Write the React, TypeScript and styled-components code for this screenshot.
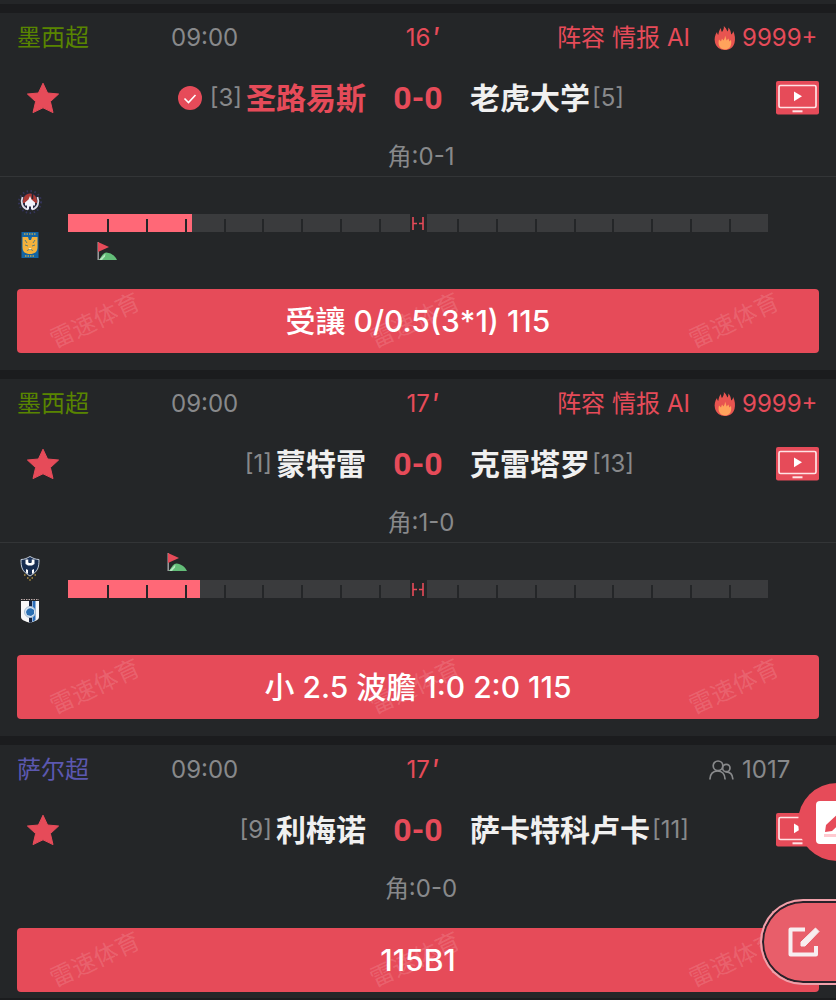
import React, { Fragment } from "react";
import styled, { createGlobalStyle } from "styled-components";

const RED = "#e64b59";
const BG = "#242628";
const GREY = "#88898b";

const GlobalStyle = createGlobalStyle`
  * { box-sizing: border-box; }
  html { background: ${BG}; }
  body {
    margin: 0;
    color: #f0f0f0;
    font-family: Inter, "Noto Sans CJK SC", sans-serif;
    font-size: 24px;
    line-height: 32px;
    overflow-x: hidden;
  }
  button { font: inherit; color: inherit; border: 0; padding: 0; background: none; cursor: pointer; }
  a { color: inherit; text-decoration: none; }
  svg { display: block; flex: none; }
`;

const Page = styled.main`
  padding-top: 4px;
  background: ${BG};
`;

const Card = styled.article`
  border-top: 9px solid #1b1c1e;
  padding: 9px 0 17px;
  display: flex;
  flex-direction: column;
  &:last-child { padding-bottom: 6px; border-bottom: 9px solid #1b1c1e; }
`;

const Row = styled.div<{ $height: number }>`
  display: grid;
  grid-template-columns: minmax(0, 1fr) 104px minmax(0, 1fr);
  align-items: center;
  height: ${(p) => p.$height}px;
  padding: 0 17px;
`;

const MetaLeft = styled.div`
  display: grid;
  grid-template-columns: 154px 1fr;
`;

const League = styled.span<{ $color: string }>`
  color: ${(p) => p.$color};
`;

const Time = styled.time`
  color: ${GREY};
`;

const Minute = styled.span`
  display: flex;
  justify-content: center;
  gap: 3px;
  padding-left: 10px;
  color: ${RED};
`;

const Prime = styled.span`
  font-size: 30px;
`;

const MetaRight = styled.div`
  display: flex;
  justify-content: flex-end;
  align-items: center;
  color: ${RED};
`;

const Links = styled.nav`
  display: flex;
  gap: 7px;
  margin-right: 24px;
  white-space: nowrap;
`;

const Count = styled.span<{ $muted?: boolean }>`
  display: flex;
  align-items: center;
  gap: ${(p) => (p.$muted ? 8 : 6)}px;
  color: ${(p) => (p.$muted ? GREY : RED)};
`;

const CountValue = styled.span`
  width: 77px;
  white-space: nowrap;
`;

const Home = styled.div`
  display: flex;
  align-items: center;
`;

const Star = styled.button`
  width: 52px;
  height: 36px;
  display: grid;
  place-items: center;
  margin-right: auto;
`;

const Away = styled.div`
  display: flex;
  align-items: center;
`;

const Watch = styled.button`
  margin-left: auto;
`;

const Team = styled.h2<{ $picked?: boolean }>`
  margin: 0;
  color: ${(p) => (p.$picked ? RED : "#f0f0f0")};
  font-size: 30px;
  font-weight: 600;
  white-space: nowrap;
`;

const Rank = styled.span`
  margin: 0 4px 0 2px;
  color: ${GREY};
`;

const Check = styled.span`
  margin-right: 6px;
`;

const Score = styled.strong`
  color: ${RED};
  font-family: Roboto, Inter, sans-serif;
  font-size: 32px;
  font-weight: 700;
  text-align: center;
`;

const Corners = styled.p`
  margin: 0;
  padding: 0 0 4px 6px;
  color: ${GREY};
  text-align: center;
  height: 35px;
`;

const Timeline = styled.section`
  display: flex;
  height: 113px;
  border-top: 1px solid #333537;
`;

const Crests = styled.div`
  width: 60px;
  margin-right: 8px;
  padding-top: 12px;
  display: flex;
  flex-direction: column;
  align-items: center;
  gap: 17px;
`;

const Track = styled.div`
  flex: 1;
  margin-right: 68px;
  padding-top: 8px;
  display: grid;
  grid-template-rows: 29px 18px 29px;
`;

const EventLane = styled.div<{ $below?: boolean }>`
  display: flex;
  padding-top: ${(p) => (p.$below ? 9 : 1)}px;
`;

const Bar = styled.div`
  position: relative;
  display: flex;
  background: #3a3b3d;
`;

const Elapsed = styled.div`
  position: absolute;
  inset: 0 auto 0 0;
  background: #ff6877;
`;

const Segment = styled.span`
  position: relative;
  flex: 1;
  margin-top: 5px;
  border-left: 2px solid ${BG};
  &:first-of-type { border-left-color: transparent; }
`;

const HalfTime = styled.span`
  position: absolute;
  inset: 0;
  margin: auto;
  width: 17px;
  display: grid;
  place-items: center;
  background: ${BG};
`;

const Banner = styled.button`
  position: relative;
  height: 64px;
  margin: 0 17px;
  border-radius: 4px;
  background: ${RED};
  color: #fff;
  font-size: 30px;
  font-weight: 500;
`;

const Label = styled.span`
  position: relative;
`;

const Raised = styled.span`
  font-feature-settings: "calt" 0;
`;

const Marks = styled.span`
  position: absolute;
  inset: 0;
  padding: 0 37px 0 30px;
  display: flex;
  justify-content: space-between;
  align-items: center;
  color: rgba(255, 255, 255, 0.14);
  font-size: 24px;
  font-weight: 400;
  white-space: nowrap;
`;

const Mark = styled.span`
  transform: rotate(-25deg);
`;

const PostButton = styled.button`
  position: fixed;
  right: -40px;
  bottom: 139px;
  width: 78px;
  height: 78px;
  border-radius: 50%;
  background: ${RED};
  padding-left: 18px;
`;

const EditButton = styled.button`
  position: fixed;
  right: -12px;
  bottom: 15px;
  width: 88px;
  height: 86px;
  padding-left: 22px;
  border: 2px solid #f0a0aa;
  border-right: 0;
  border-radius: 43px 0 0 43px;
  background: #e85e6a;
  box-shadow: inset 0 0 0 2px #29222a;
`;

const Flag = styled.span`
  margin-left: -2px;
`;

const Spacer = styled.div`
  height: 20px;
`;

function StarIcon() {
  return (
    <svg width="34" height="32" viewBox="0 0 34 32" aria-hidden="true">
      <path d="M17 1.200 21.600 11 32.600 12 24.400 19.600 27 30.600 17 25.800 7 30.600 9.600 19.600 1.400 12 12.400 11Z" fill={RED} stroke={RED} strokeLinejoin="round" />
    </svg>
  );
}

function CheckIcon() {
  return (
    <svg width="24" height="24" viewBox="0 0 24 24" aria-hidden="true">
      <circle cx="12" cy="12" r="12" fill={RED} />
      <path d="m6.500 12.500 4 4 7-7.500" fill="none" stroke="#fff" strokeWidth="1.600" />
    </svg>
  );
}

function TvIcon() {
  return (
    <svg width="43" height="34" viewBox="0 0 43 34" aria-hidden="true">
      <rect width="43" height="33.500" rx="2" fill={RED} />
      <rect x="3" y="4.500" width="37" height="22" rx="1.500" fill="none" stroke="#ffe3e5" strokeWidth="1.700" />
      <path d="M18 10.500 26 15.300 18 20.300Z" fill="#fff" />
      <path d="M16.500 30.300h10" stroke="#ffe3e5" strokeWidth="2" />
    </svg>
  );
}

function FireIcon() {
  return (
    <svg width="22" height="24" viewBox="0 0 22 24" aria-hidden="true">
      <path d="M9.800 0C11.500 1.500 12.800 3.500 13.300 5.500 14.200 4.500 14.500 3 14.300 1.500 16.300 3.500 17 6 17.200 8.500 18.500 7.500 19 6.500 19.200 5 21 9 21.500 13 20.500 17 19.300 21.500 15.500 24 11 24 6 24 2 21 1 16.500 0 12.500 1 9 3 6 3.100 7.300 3.500 8.300 4.200 9 4.700 6.500 5.200 4 7 2 7 3.500 7.300 5 8 6 9.500 4 10.200 2 9.800 0Z" fill="#e85450" />
      <path d="M11 9.500C12 11.500 12.200 13 12.500 14.500L14.500 12.500C14.900 13.500 15 14.500 15.200 15.500L17 14C18 19 16 23.500 11 23.500 6 23.500 3.500 19 5 13.500L7 15.500 8 12.500 9.500 14.500C10.500 13 11 11.500 11 9.500Z" fill="#ffa35c" />
    </svg>
  );
}

function PeopleIcon() {
  return (
    <svg width="25" height="20" viewBox="0 0 25 20" fill="none" stroke={GREY} strokeWidth="1.700" strokeLinecap="round" aria-hidden="true">
      <circle cx="9" cy="5.800" r="4.800" />
      <path d="M1 18.800C1 14.200 4 10.800 8.500 10.800c4.500 0 7.300 3.400 7.500 8" />
      <circle cx="17.300" cy="8" r="3.700" />
      <path d="M17 11.800c4 0 6.500 2.700 6.800 7" />
    </svg>
  );
}

function CornerFlagIcon() {
  return (
    <svg width="21" height="20" viewBox="0 0 21 20" aria-hidden="true">
      <path d="M1.200 1v18" stroke="#a5a6a8" strokeWidth="1.400" />
      <path d="M1 1 12 6 1 11Z" fill={RED} />
      <path d="M2 19C5 14.500 6.500 11.500 9.500 11.500 14 12 18 14.500 20 19Z" fill="#63bd78" />
      <path d="M2 19 8.500 12.500 8 15.500 5 19Z" fill="#b2e4bd" />
    </svg>
  );
}

function HalfIcon() {
  return (
    <svg width="12" height="13" viewBox="0 0 12 13" fill="none" stroke={RED} strokeWidth="1.600" aria-hidden="true">
      <path d="M1 0v13M11 0v13M1 6.500h4M7 6.500h4" />
    </svg>
  );
}

type CrestName = "sanluis" | "tigres" | "monterrey" | "queretaro";

function Crest({ name }: { name: CrestName }) {
  return (
    <svg width="26" height="26" viewBox="0 0 26 26" aria-hidden="true">
      {name === "sanluis" && (
        <>
          <circle cx="13" cy="13" r="11" fill="none" stroke="#34345a" strokeWidth="2" strokeDasharray="1.500 2.500" />
          <circle cx="13" cy="12.500" r="9" fill="#24263e" />
          <path d="M6 14C5.500 8 9 4.500 13 4.500S20.500 8 20 14Z" fill="#a93a36" />
          <path d="M5.500 8C3.500 13 5 19 11 20.500M20.500 8C22.500 13 21 19 15 20.500" fill="none" stroke="#dcdce8" strokeWidth="1.800" />
          <path d="m13 7 1.500 3.500 3.500 3v3h-2v4h-2v-3h-2v3h-2v-4H8v-3l3.500-3Z" fill="#f1f1fa" />
          <path d="M15.500 4v6" stroke="#242634" strokeWidth="1.500" />
        </>
      )}
      {name === "tigres" && (
        <>
          <path d="M4.500 0h17v26h-17Z" fill="#1264a4" />
          <path d="M7 2h12M8 24h10" stroke="#bba557" strokeWidth="1.500" strokeDasharray="1.500 1" />
          <path d="M5.500 5H11L12 8h2l1-3h5.500v10c0 5-3 7-7.500 7s-7.500-2-7.500-7Z" fill="#f5b23c" />
          <path d="m8 8 2 3M18 8l-2 3M8 13l3 1M18 13l-3 1M10 19c1-2 5-2 6 0" stroke="#5c7f78" strokeWidth="1" fill="none" />
          <path d="M11.500 16h3L13 18Z" fill="#fff0bd" />
        </>
      )}
      {name === "monterrey" && (
        <>
          <path d="M4 4.500C8 4.500 10 3 13 1.500c3 1.500 5 3 9 3 0 8-1 12-9 16.500C5 16.500 4 12.500 4 4.500Z" fill="#182d50" stroke="#c3ccd9" />
          <path d="M8.500 4.500h3V8h3V4.500h3V9l-2.500 1.500h-4L8.500 9ZM9 14l2 1v4l-2-1.500ZM15 15l2-1v3.500L15 19Z" fill="#fff" />
          <path d="M11.500 3h3v4h-3Z" fill="#1d355d" />
          <path d="M7 20h1.500M10 23h1.500M14.500 23H16M17.500 20H19M12.300 25h1.400" stroke="#b29443" strokeWidth="1.500" />
        </>
      )}
      {name === "queretaro" && (
        <>
          <path d="M4 3h18v16c0 3-4 4-9 6-5-2-9-3-9-6Z" fill="#f7f7f7" />
          <path d="M4 1.500h18" stroke="#bba9a7" strokeDasharray="1.500 1" />
          <path d="M12 3h3v21l-2 1-1-1Z" fill="#17233d" />
          <path d="M15.500 3h3v19l-3 2Z" fill="#2c6fba" />
          <circle cx="13" cy="14" r="5.500" fill="#dce8f4" stroke="#a9bdd1" />
          <path d="M9 14c1-4 5-5 8-2v4l-3 2-4-1Z" fill="#2a6fb2" />
        </>
      )}
    </svg>
  );
}

interface CornerEvent {
  minute: number;
  side: "home" | "away";
}

interface Match {
  league: string;
  leagueColor: string;
  minute: number;
  hot: boolean;
  views: string;
  home: string;
  homeRank: number;
  homePicked?: boolean;
  away: string;
  awayRank: number;
  corners: string;
  crests?: [CrestName, CrestName];
  event?: CornerEvent;
  tip: string;
}

const matches: Match[] = [
  {
    league: "墨西超", leagueColor: "#598500", minute: 16, hot: true, views: "9999+",
    home: "圣路易斯", homeRank: 3, homePicked: true, away: "老虎大学", awayRank: 5,
    corners: "0-1", crests: ["sanluis", "tigres"], event: { minute: 4, side: "away" },
    tip: "受讓 0/0.5(3*1) 115",
  },
  {
    league: "墨西超", leagueColor: "#598500", minute: 17, hot: true, views: "9999+",
    home: "蒙特雷", homeRank: 1, away: "克雷塔罗", awayRank: 13,
    corners: "1-0", crests: ["monterrey", "queretaro"], event: { minute: 13, side: "home" },
    tip: "小 2.5 波膽 1:0 2:0 115",
  },
  {
    league: "萨尔超", leagueColor: "#5c58b0", minute: 17, hot: false, views: "1017",
    home: "利梅诺", homeRank: 9, away: "萨卡特科卢卡", awayRank: 11,
    corners: "0-0", tip: "115B1",
  },
];

const percent = (minute: number) => `${(minute / 90) * 100}%`;

function Lane({ event, below }: { event?: CornerEvent; below?: boolean }) {
  return (
    <EventLane $below={below}>
      {event && (
        <>
          <span style={{ width: percent(event.minute) }} />
          <Flag><CornerFlagIcon /></Flag>
        </>
      )}
    </EventLane>
  );
}

// The multiplication mark is kept at superscript height.
function Tip({ text }: { text: string }) {
  return (
    <Label>
      {text.split("*").map((part, i) => (
        <Fragment key={i}>
          {i > 0 && <Raised>*</Raised>}
          {part}
        </Fragment>
      ))}
    </Label>
  );
}

function MatchCard({ match }: { match: Match }) {
  const { event, crests } = match;
  return (
    <Card>
      <Row $height={32}>
        <MetaLeft>
          <League $color={match.leagueColor}>{match.league}</League>
          <Time>09:00</Time>
        </MetaLeft>
        <Minute><span>{match.minute}</span><Prime>′</Prime></Minute>
        <MetaRight>
          {match.hot && (
            <Links>
              <a href="#lineup">阵容</a>
              <a href="#news">情报</a>
              <a href="#ai">AI</a>
            </Links>
          )}
          <Count $muted={!match.hot}>
            {match.hot ? <FireIcon /> : <PeopleIcon />}
            <CountValue>{match.views}</CountValue>
          </Count>
        </MetaRight>
      </Row>
      <Row $height={87}>
        <Home>
          <Star aria-label="收藏"><StarIcon /></Star>
          {match.homePicked && <Check><CheckIcon /></Check>}
          <Rank>[{match.homeRank}]</Rank>
          <Team $picked={match.homePicked}>{match.home}</Team>
        </Home>
        <Score>0-0</Score>
        <Away>
          <Team>{match.away}</Team>
          <Rank>[{match.awayRank}]</Rank>
          <Watch aria-label="直播"><TvIcon /></Watch>
        </Away>
      </Row>
      <Corners>角:{match.corners}</Corners>
      {crests ? (
        <Timeline>
          <Crests>
            <Crest name={crests[0]} />
            <Crest name={crests[1]} />
          </Crests>
          <Track>
            <Lane event={event?.side === "home" ? event : undefined} />
            <Bar>
              <Elapsed style={{ width: percent(match.minute) }} />
              {Array.from({ length: 18 }, (_, i) => <Segment key={i} />)}
              <HalfTime><HalfIcon /></HalfTime>
            </Bar>
            <Lane below event={event?.side === "away" ? event : undefined} />
          </Track>
        </Timeline>
      ) : (
        <Spacer />
      )}
      <Banner>
        <Marks aria-hidden="true">
          <Mark>雷速体育</Mark>
          <Mark>雷速体育</Mark>
          <Mark>雷速体育</Mark>
        </Marks>
        <Tip text={match.tip} />
      </Banner>
    </Card>
  );
}

export default function App() {
  return (
    <>
      <GlobalStyle />
      <Page>
        {matches.map((m) => <MatchCard key={m.home} match={m} />)}
      </Page>
      <PostButton aria-label="发布">
        <svg width="43" height="43" viewBox="0 0 43 43" aria-hidden="true">
          <rect width="43" height="43" rx="4" fill="#fff" />
          <path d="m9 31 1-7L26 9l6 6-16 15Z" fill={RED} />
          <path d="M8 34.500h27" stroke="#ffc9cf" strokeWidth="3" />
        </svg>
      </PostButton>
      <EditButton aria-label="编辑">
        <svg width="38" height="34" viewBox="0 0 38 34" aria-hidden="true">
          <path d="M21 4.500H6.500v25H32V21" fill="none" stroke="#f7eef0" strokeWidth="4" strokeLinejoin="round" />
          <path d="m17 21v-4L31.500 3l3.500 3.500L21 21Z" fill="#f7eef0" stroke="#f7eef0" strokeLinejoin="round" />
        </svg>
      </EditButton>
    </>
  );
}
